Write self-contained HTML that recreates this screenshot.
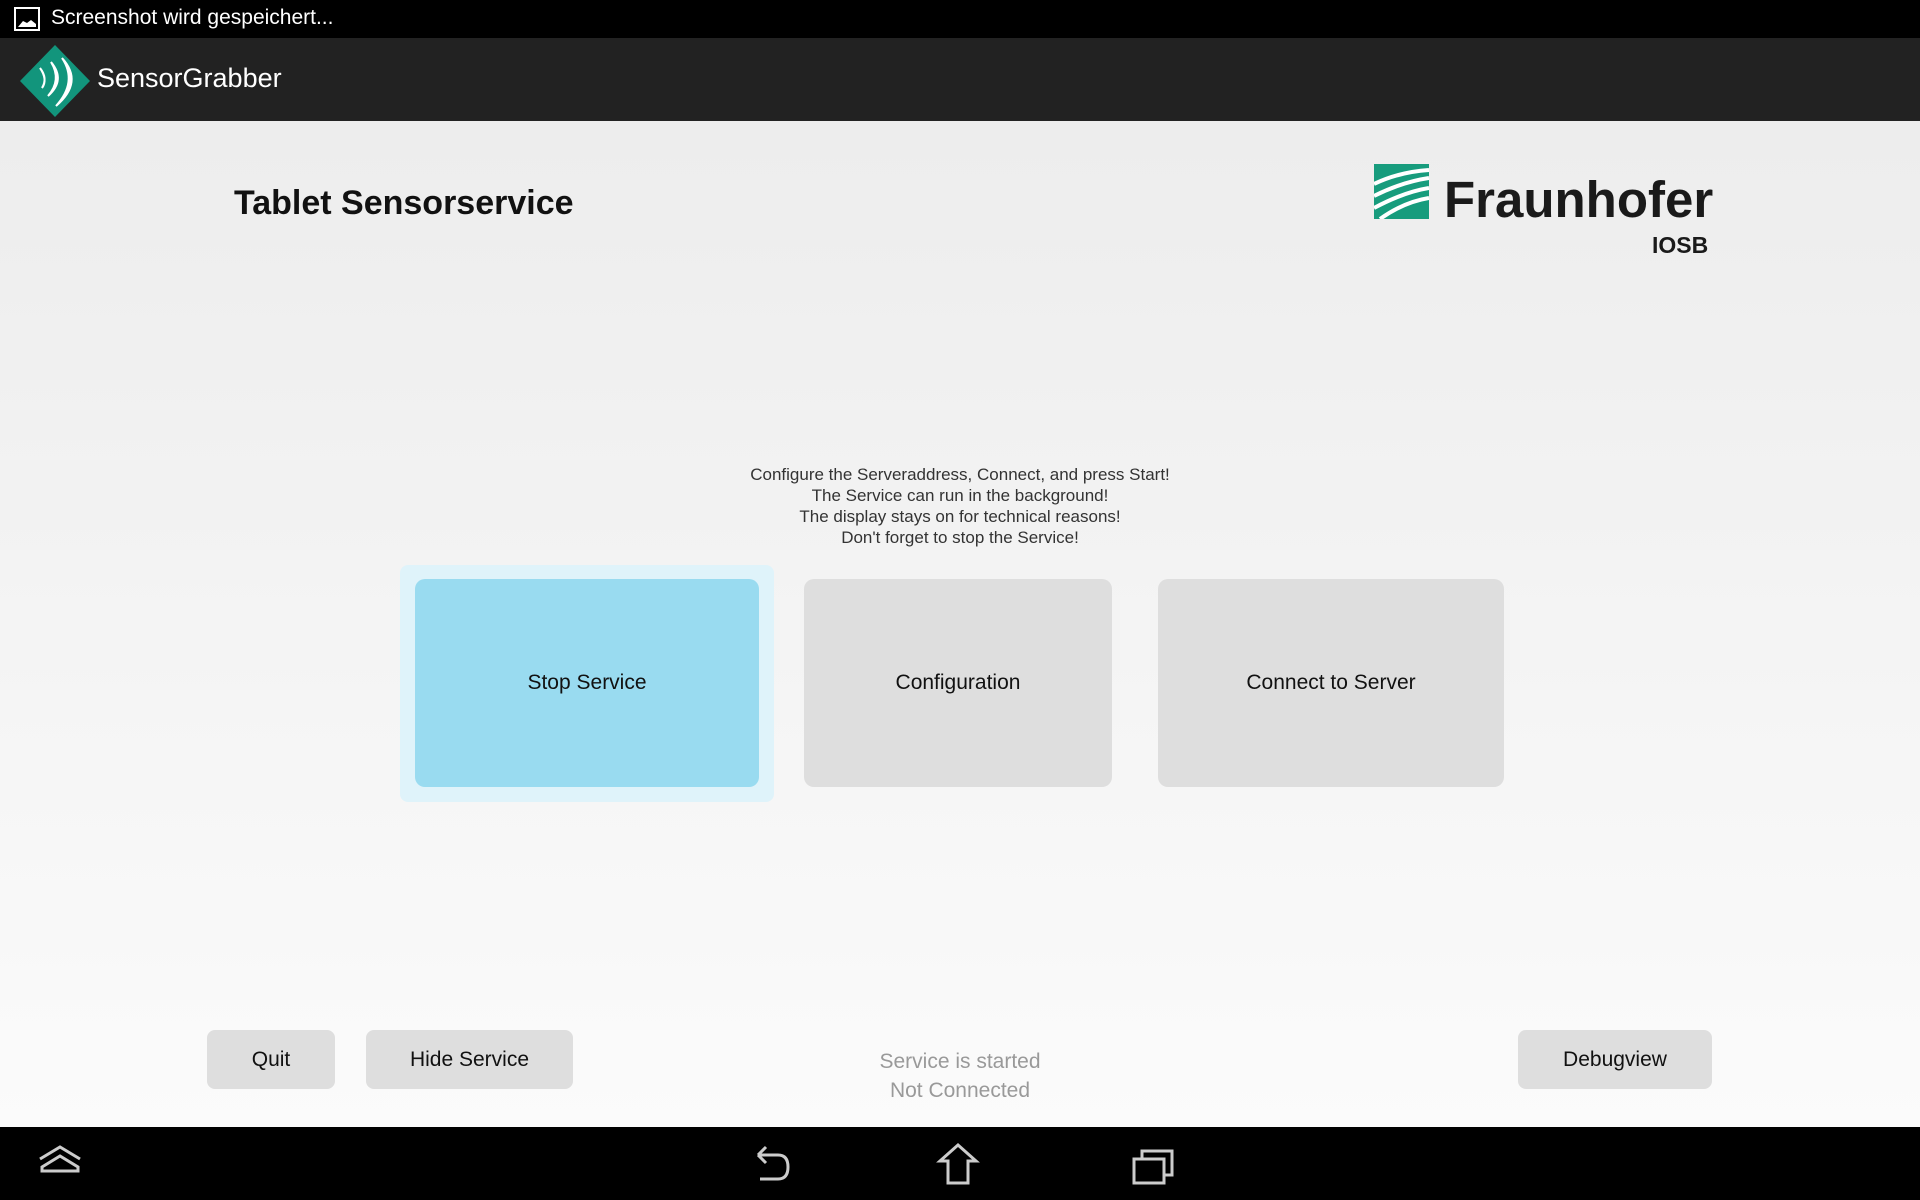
<!DOCTYPE html>
<html><head><style>
*{margin:0;padding:0;box-sizing:border-box}
body{width:1920px;height:1200px;overflow:hidden;font-family:"Liberation Sans",sans-serif;position:relative;background:linear-gradient(#ebebeb,#fbfbfb 1127px)}
.abs{position:absolute}
.btn{position:absolute;background:#dedede;border-radius:10px;display:flex;align-items:center;justify-content:center;font-size:21px;color:#111}
.sm{border-radius:8px;font-size:21px}
</style></head><body>
<div class="abs" style="left:0;top:0;width:1920px;height:38px;background:#000"></div>
<svg class="abs" style="left:14px;top:7px" width="26" height="24" viewBox="0 0 26 24"><rect x="1" y="1" width="24" height="22" fill="none" stroke="#fff" stroke-width="2"/><path d="M4 20 L9 14 L13 16 L17 13 L22 17 L22 20 Z" fill="#fff"/></svg>
<div class="abs" style="left:51px;top:6px;color:#fff;font-size:21px">Screenshot wird gespeichert...</div>
<div class="abs" style="left:0;top:38px;width:1920px;height:83px;background:#222"></div>
<svg class="abs" style="left:18px;top:44px" width="74" height="74" viewBox="0 0 74 74"><path d="M37 1 L72 37 L37 73 L2 37 Z" fill="#12957c"/><path d="M22 24 Q30 34 24 44 Q30 36 22 24Z M33 18 Q44 36 30 52 Q48 36 33 18Z M44 14 Q60 38 38 62 Q66 38 44 14Z" fill="#fff" stroke="#fff" stroke-width="2"/></svg>
<div class="abs" style="left:97px;top:63px;color:#fff;font-size:27px">SensorGrabber</div>
<div class="abs" style="left:234px;top:184px;font-size:34px;font-weight:bold;color:#111">Tablet Sensorservice</div>
<svg class="abs" style="left:1374px;top:164px" width="55" height="55" viewBox="0 0 55 55"><rect width="55" height="55" fill="#179c7d"/><path d="M0 20 Q25 8 55 6 M0 32 Q28 18 55 14 M0 44 Q30 28 55 24 M6 55 Q30 38 55 34" stroke="#fff" stroke-width="4" fill="none"/></svg>
<div class="abs" style="left:1444px;top:170px;font-size:51px;font-weight:bold;color:#1a1a1a">Fraunhofer</div>
<div class="abs" style="left:1652px;top:232px;font-size:23px;font-weight:bold;color:#1a1a1a">IOSB</div>
<div class="abs" style="left:660px;top:464px;width:600px;text-align:center;font-size:17px;line-height:21px;color:#333">Configure the Serveraddress, Connect, and press Start!<br>The Service can run in the background!<br>The display stays on for technical reasons!<br>Don't forget to stop the Service!</div>
<div class="abs" style="left:400px;top:565px;width:374px;height:237px;background:#dff3fa;border-radius:8px"></div>
<div class="btn" style="left:415px;top:579px;width:344px;height:208px;background:#99dbf0">Stop Service</div>
<div class="btn" style="left:804px;top:579px;width:308px;height:208px">Configuration</div>
<div class="btn" style="left:1158px;top:579px;width:346px;height:208px">Connect to Server</div>
<div class="btn sm" style="left:207px;top:1030px;width:128px;height:59px">Quit</div>
<div class="btn sm" style="left:366px;top:1030px;width:207px;height:59px">Hide Service</div>
<div class="btn sm" style="left:1518px;top:1030px;width:194px;height:59px">Debugview</div>
<div class="abs" style="left:760px;top:1047px;width:400px;text-align:center;font-size:21px;line-height:29px;color:#999">Service is started<br>Not Connected</div>
<div class="abs" style="left:0;top:1127px;width:1920px;height:73px;background:#000"></div>
<svg class="abs" style="left:0;top:1127px" width="1920" height="73" viewBox="0 0 1920 73" fill="none" stroke="#ccc" stroke-width="3">
<path d="M40 32 L60 20 L80 32 M42 40 L60 29 L78 40 L78 44 L42 44 Z"/>
<path d="M758 28 L778 28 Q788 28 788 40 Q788 52 778 52 L760 52 M758 28 L766 20 M758 28 L766 36"/>
<path d="M958 18 L940 34 L948 34 L948 56 L968 56 L968 34 L976 34 Z"/>
<path d="M1134 32 L1164 32 L1164 56 L1134 56 Z M1142 32 L1142 24 L1172 24 L1172 48 L1164 48"/>
</svg>
</body></html>
